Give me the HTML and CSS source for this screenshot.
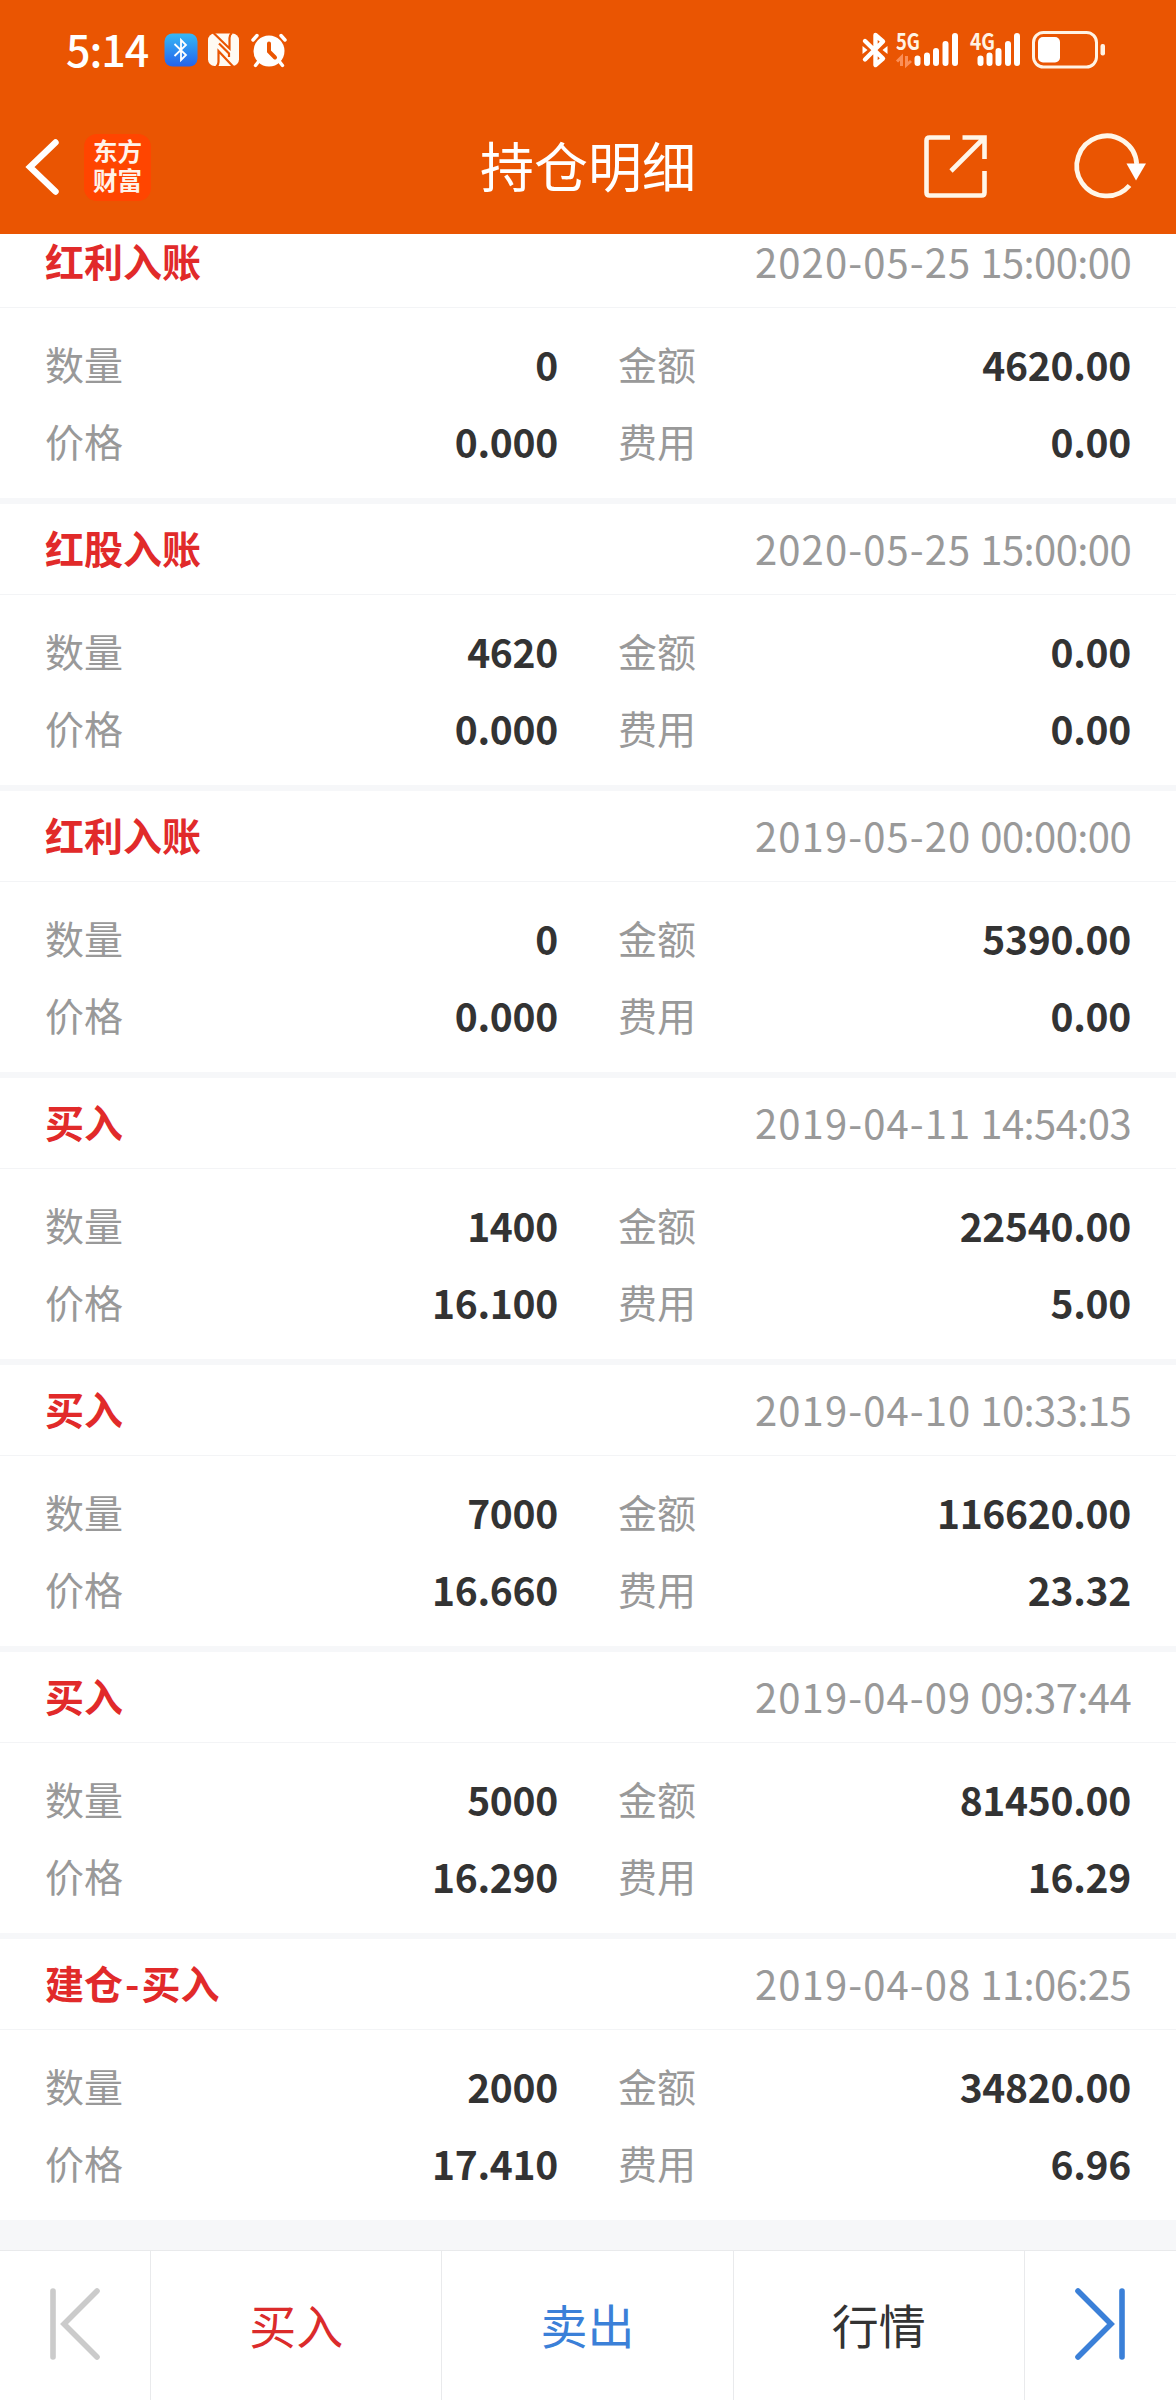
FILE: index.html
```html
<!DOCTYPE html>
<html lang="zh-CN">
<head>
<meta charset="utf-8">
<title>持仓明细</title>
<link rel="stylesheet" href="styles.css">
</head>
<body>
<div class="app">
  <header class="header">
    <div class="status">
      <div class="status-left">
        <span class="time">5:14</span>
        <svg class="badge-bt" width="34" height="34" viewBox="0 0 34 34">
          <defs><linearGradient id="bt" x1="0" y1="0" x2="0" y2="1"><stop offset="0" stop-color="#35b8f5"/><stop offset="1" stop-color="#2563ec"/></linearGradient></defs>
          <rect x=".5" y=".5" width="33" height="33" rx="8" fill="url(#bt)"/>
          <path d="M10.500 11 22 22 17 27V7L22 12 10.500 23" fill="none" stroke="#fff" stroke-width="1.800"/>
        </svg>
        <svg class="nfc" width="32" height="34" viewBox="0 0 32 34">
          <rect y=".5" width="31" height="32.500" rx="6.500" fill="#fffaf2"/>
          <path d="M5.500 0 21.500 15.500V5Q21.500 2 24 0M25.500 34 10.500 18V29Q10.500 32 8 34M11 10.500 21 20.500V24" stroke="#ea5502" stroke-width="2.200" fill="none"/>
        </svg>
        <svg class="alarm" width="36" height="35" viewBox="0 0 36 35">
          <g stroke="#fff" stroke-width="3.400" stroke-linecap="round"><path d="M2 7 6 2.500M34 7 30 2.500M8 28 4.500 32.500M28 28 31.500 32.500"/></g>
          <circle cx="18" cy="18" r="15.500" fill="#fff"/>
          <path d="M18 10.500V18.500L24 24.500" fill="none" stroke="#ea5502" stroke-width="4" stroke-linecap="round"/>
        </svg>
      </div>
      <div class="status-right">
        <svg class="bt" width="26" height="36" viewBox="0 0 26 36">
          <path d="M3 9 21 26.500 13.500 33V3L21 9.500 3 27.500" fill="none" stroke="#fff" stroke-width="4.400" stroke-linejoin="round" stroke-linecap="round"/>
          <path d="M.5 14 5.500 18 .5 22ZM25.500 14 20.500 18 25.500 22Z" fill="#fff"/>
        </svg>
        <svg class="sig5" width="64" height="36" viewBox="0 0 64 36">
          <text class="net" x="0" y="17.500" textLength="24" lengthAdjust="spacingAndGlyphs">5G</text>
          <path d="M5.500 34V25L1 29.500M10.500 24V33L15 29" fill="none" stroke="#fb8f58" stroke-width="3"/>
          <g stroke="#fff" stroke-width="6" stroke-linecap="round"><path d="M21.500 26.500V31M31 23.500V31M40 19V31M49.500 12V31M59 4V31"/></g>
        </svg>
        <svg class="sig4" width="52" height="36" viewBox="0 0 52 36">
          <text class="net" x="0" y="17.500" textLength="25" lengthAdjust="spacingAndGlyphs">4G</text>
          <g stroke="#fff" stroke-width="6" stroke-linecap="round"><path d="M10.500 26.500V31M19.500 23.500V31M28.500 19V31M38 12V31M47 4V31"/></g>
        </svg>
        <svg class="battery" width="74" height="38" viewBox="0 0 74 38">
          <rect x="1.500" y="1.500" width="63" height="34.500" rx="10" fill="none" stroke="#fff3e4" stroke-width="3"/>
          <rect x="6" y="6" width="22" height="25.500" rx="5" fill="#fff"/>
          <rect x="68.500" y="13" width="4.500" height="11.500" rx="2" fill="#fff3e4"/>
        </svg>
      </div>
    </div>
    <div class="nav">
      <div class="nav-side">
        <svg class="back" width="34" height="56" viewBox="0 0 34 56"><path d="M29.500 3.500 4 28 29.500 52.500" fill="none" stroke="#fff" stroke-width="6.400" stroke-linecap="round"/></svg>
        <div class="logo">东方<br>财富</div>
      </div>
      <h1 class="title">持仓明细</h1>
      <div class="nav-side nav-right">
        <svg class="share" width="64" height="64" viewBox="0 0 64 64">
          <path d="M26 2.500H5.500Q2.500 2.500 2.500 5.500V57.500Q2.500 60.500 5.500 60.500H57.500Q60.500 60.500 60.500 57.500V36M38.500 2.500H60.500V24M60 3 27 36" fill="none" stroke="#fff6e8" stroke-width="4.600"/>
        </svg>
        <svg class="reload" width="72" height="66" viewBox="0 0 72 66">
          <path d="M54.500 51.500A30 30 0 1 1 61.700 30" fill="none" stroke="#fff6e8" stroke-width="4.800"/>
          <path d="M51.500 29.500H71L61 46.500Z" fill="#fff"/>
        </svg>
      </div>
    </div>
  </header>

  <main class="list">
    <section class="record">
      <div class="head"><span class="kind">红利入账</span><time class="date"><span class="day">2020-05-25</span> <span class="clock">15:00:00</span></time></div>
      <dl class="grid">
        <div class="cell"><dt>数量</dt><dd>0</dd></div><div class="cell"><dt>金额</dt><dd>4620.00</dd></div>
        <div class="cell"><dt>价格</dt><dd>0.000</dd></div><div class="cell"><dt>费用</dt><dd>0.00</dd></div>
      </dl>
    </section>
    <section class="record">
      <div class="head"><span class="kind">红股入账</span><time class="date"><span class="day">2020-05-25</span> <span class="clock">15:00:00</span></time></div>
      <dl class="grid">
        <div class="cell"><dt>数量</dt><dd>4620</dd></div><div class="cell"><dt>金额</dt><dd>0.00</dd></div>
        <div class="cell"><dt>价格</dt><dd>0.000</dd></div><div class="cell"><dt>费用</dt><dd>0.00</dd></div>
      </dl>
    </section>
    <section class="record">
      <div class="head"><span class="kind">红利入账</span><time class="date"><span class="day">2019-05-20</span> <span class="clock">00:00:00</span></time></div>
      <dl class="grid">
        <div class="cell"><dt>数量</dt><dd>0</dd></div><div class="cell"><dt>金额</dt><dd>5390.00</dd></div>
        <div class="cell"><dt>价格</dt><dd>0.000</dd></div><div class="cell"><dt>费用</dt><dd>0.00</dd></div>
      </dl>
    </section>
    <section class="record">
      <div class="head"><span class="kind">买入</span><time class="date"><span class="day">2019-04-11</span> <span class="clock">14:54:03</span></time></div>
      <dl class="grid">
        <div class="cell"><dt>数量</dt><dd>1400</dd></div><div class="cell"><dt>金额</dt><dd>22540.00</dd></div>
        <div class="cell"><dt>价格</dt><dd>16.100</dd></div><div class="cell"><dt>费用</dt><dd>5.00</dd></div>
      </dl>
    </section>
    <section class="record">
      <div class="head"><span class="kind">买入</span><time class="date"><span class="day">2019-04-10</span> <span class="clock">10:33:15</span></time></div>
      <dl class="grid">
        <div class="cell"><dt>数量</dt><dd>7000</dd></div><div class="cell"><dt>金额</dt><dd>116620.00</dd></div>
        <div class="cell"><dt>价格</dt><dd>16.660</dd></div><div class="cell"><dt>费用</dt><dd>23.32</dd></div>
      </dl>
    </section>
    <section class="record">
      <div class="head"><span class="kind">买入</span><time class="date"><span class="day">2019-04-09</span> <span class="clock">09:37:44</span></time></div>
      <dl class="grid">
        <div class="cell"><dt>数量</dt><dd>5000</dd></div><div class="cell"><dt>金额</dt><dd>81450.00</dd></div>
        <div class="cell"><dt>价格</dt><dd>16.290</dd></div><div class="cell"><dt>费用</dt><dd>16.29</dd></div>
      </dl>
    </section>
    <section class="record">
      <div class="head"><span class="kind">建仓<span class="dash">-</span>买入</span><time class="date"><span class="day">2019-04-08</span> <span class="clock">11:06:25</span></time></div>
      <dl class="grid">
        <div class="cell"><dt>数量</dt><dd>2000</dd></div><div class="cell"><dt>金额</dt><dd>34820.00</dd></div>
        <div class="cell"><dt>价格</dt><dd>17.410</dd></div><div class="cell"><dt>费用</dt><dd>6.96</dd></div>
      </dl>
    </section>
  </main>

  <footer class="tabs">
    <div class="tab tab-edge">
      <svg width="50" height="72" viewBox="0 0 50 72"><path d="M3 3V69M47 3 14 36 47 69" fill="none" stroke="#cbcbcb" stroke-width="5.600" stroke-linecap="round"/></svg>
    </div>
    <div class="tab buy">买入</div>
    <div class="tab sell">卖出</div>
    <div class="tab quote">行情</div>
    <div class="tab tab-edge">
      <svg width="50" height="72" viewBox="0 0 50 72"><path d="M47 3V69M3 3 36 36 3 69" fill="none" stroke="#3b80d8" stroke-width="5.600" stroke-linecap="round"/></svg>
    </div>
  </footer>
</div>
</body>
</html>
```
FILE: styles.css
```css
* { box-sizing: border-box; }

body {
  margin: 0;
  background: #f6f7f9;
  font-family: "Noto Sans CJK SC", "Noto Sans", sans-serif;
  color: #333;
}

svg { display: block; flex: none; overflow: visible; }

.app {
  display: flex;
  flex-direction: column;
  width: 1176px;
  height: 2400px;
  overflow: hidden;
}

.header {
  flex: none;
  height: 234px;
  background: #ea5502;
  color: #fff;
}

.status {
  display: flex;
  justify-content: space-between;
  align-items: center;
  height: 100px;
  padding: 0 70px 0 66px;
}

.status-left, .status-right { display: flex; align-items: center; }

.time {
  width: 98px;
  font-size: 43px;
  font-weight: 500;
  letter-spacing: -1px;
  line-height: 60px;
  padding-bottom: 4px;
}

.nfc { margin-left: 10px; overflow: hidden; }
.alarm { margin-left: 11px; }
.sig5 { margin-left: 8px; }
.sig4 { margin-left: 10px; }
.battery { margin-left: 10px; }

.net {
  font-family: "Noto Sans CJK SC", sans-serif;
  font-size: 23px;
  font-weight: 700;
  fill: #fff3e4;
}

.nav {
  display: flex;
  align-items: center;
  height: 134px;
}

.nav-side { display: flex; flex: none; align-items: center; width: 480px; }
.back { margin-left: 26px; }

.logo {
  width: 67px;
  height: 67px;
  margin-left: 24px;
  padding-top: 2px;
  border-radius: 13px;
  background: #ff4500;
  color: #fff3ea;
  font-size: 24.500px;
  font-weight: 700;
  line-height: 29px;
  text-align: center;
}

.title {
  margin: 0;
  padding-bottom: 4px;
  font-size: 54px;
  font-weight: 400;
  line-height: 80px;
}

.nav-right { justify-content: flex-end; padding-right: 29px; }
.reload { margin-left: 87px; }

.list {
  flex: 1;
  min-height: 0;
  overflow: hidden;
}

/* The list is scrolled a little way into its first record. */
.record:first-child { margin-top: -17px; }

.record {
  height: 281px;
  margin-bottom: 6px;
  background: #fff;
}

.head {
  display: flex;
  justify-content: space-between;
  align-items: center;
  height: 91px;
  padding: 0 45px 4px;
  border-bottom: 1px solid #f3f4f6;
}

.kind {
  color: #e12a2a;
  font-size: 39px;
  font-weight: 700;
  line-height: 60px;
}

.dash { padding: 0 2px; }

.date {
  color: #999;
  font-size: 40px;
  line-height: 60px;
  padding-top: 1px;
}

.day { letter-spacing: 1.100px; }
.clock { letter-spacing: -.6px; }

.grid {
  display: grid;
  grid-template-columns: 1fr 1fr;
  grid-auto-rows: 77px;
  column-gap: 60px;
  margin: 0;
  padding: 16px 45px 0;
}

.cell { display: flex; justify-content: space-between; align-items: center; }
.cell dt { color: #999; font-size: 39px; line-height: 60px; }
.cell dd {
  margin: 0;
  padding-top: 2px;
  font-size: 39px;
  font-weight: 700;
  letter-spacing: -.3px;
  line-height: 60px;
}

.tabs {
  display: flex;
  flex: none;
  height: 150px;
  border-top: 1px solid #e9eaec;
  background: #fff;
}

.tab {
  display: flex;
  flex: 1;
  justify-content: center;
  align-items: center;
  padding-bottom: 5px;
  border-right: 1px solid #e9eaec;
  font-size: 47px;
}

.tab:last-child { border-right: 0; }
.tab-edge { flex: none; width: 151px; padding-bottom: 4px; }
.buy { color: #db2b2b; }
.sell { color: #3b80d8; }
```
